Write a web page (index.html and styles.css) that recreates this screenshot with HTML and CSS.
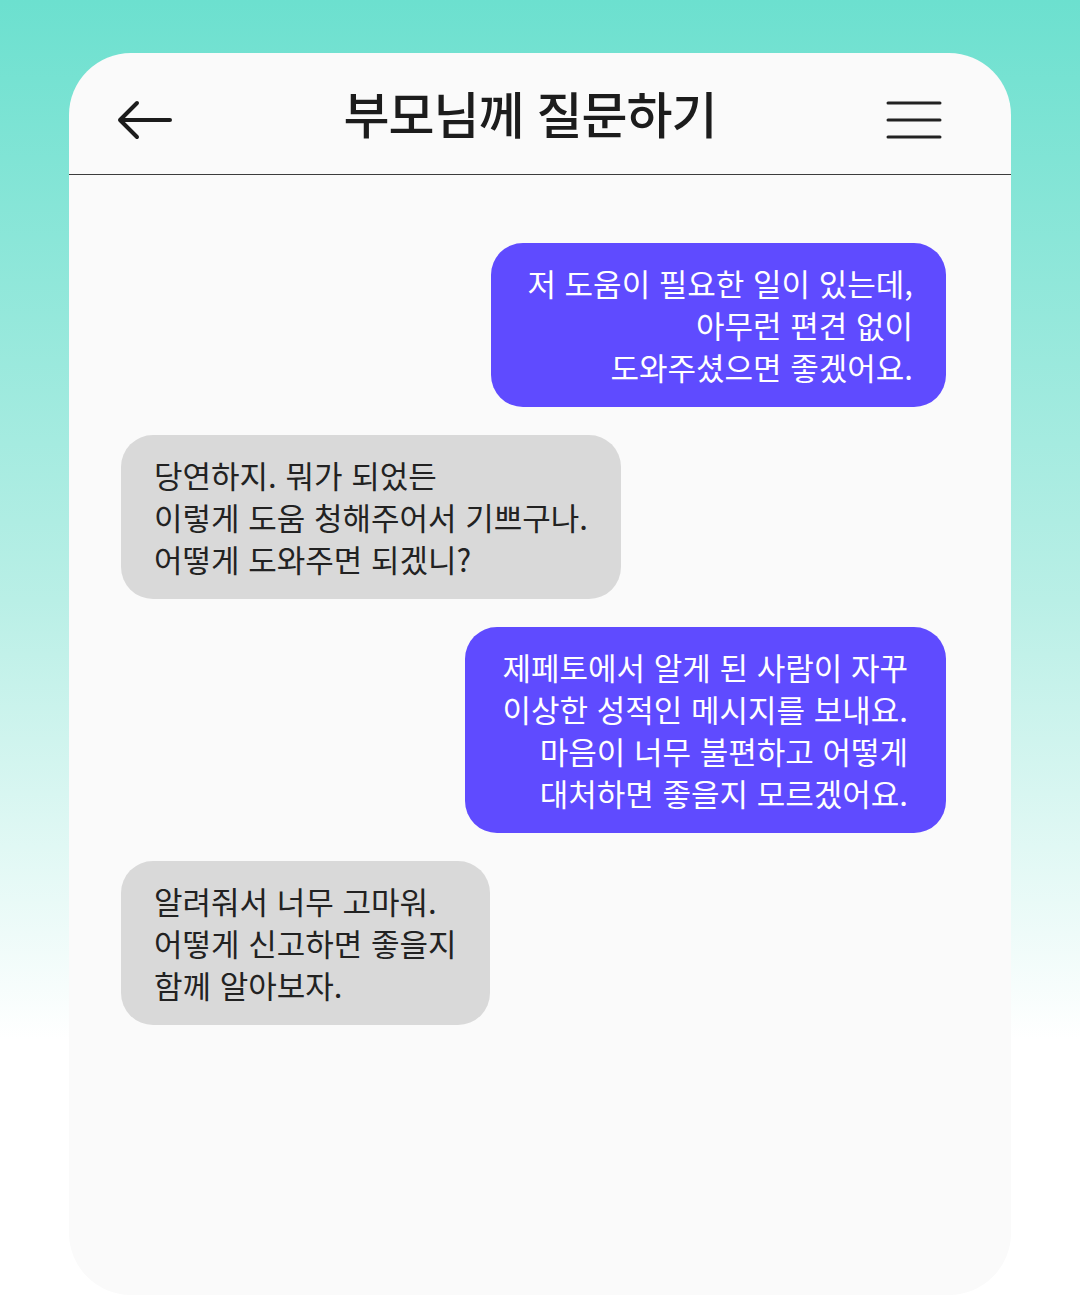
FILE: index.html
```html
<!DOCTYPE html>
<html lang="ko">
<head>
<meta charset="utf-8">
<title>부모님께 질문하기</title>
<link rel="stylesheet" href="styles.css">
</head>
<body>
<div class="page">
  <div class="card">
    <header class="header">
      <svg class="icon back" width="58" height="40" viewBox="0 0 58 40">
        <path d="M21 3 L4 20 L21 37 M4 20 H54" fill="none" stroke="#1c1c1c" stroke-width="4" stroke-linecap="round" stroke-linejoin="round"/>
      </svg>
      <h1 class="title">부모님께 질문하기</h1>
      <svg class="icon menu" width="56" height="40" viewBox="0 0 56 40">
        <path d="M2 3 H54 M2 20 H54 M2 37 H54" fill="none" stroke="#222" stroke-width="3" stroke-linecap="round"/>
      </svg>
    </header>
    <main class="chat">
      <div class="bubble me">저 도움이 필요한 일이 있는데,<br>아무런 편견 없이<br>도와주셨으면 좋겠어요.</div>
      <div class="bubble them">당연하지. 뭐가 되었든<br>이렇게 도움 청해주어서 기쁘구나.<br>어떻게 도와주면 되겠니?</div>
      <div class="bubble me wide">제페토에서 알게 된 사람이 자꾸<br>이상한 성적인 메시지를 보내요.<br>마음이 너무 불편하고 어떻게<br>대처하면 좋을지 모르겠어요.</div>
      <div class="bubble them">알려줘서 너무 고마워.<br>어떻게 신고하면 좋을지<br>함께 알아보자.</div>
    </main>
  </div>
</div>
</body>
</html>
```

FILE: styles.css
```css
* { box-sizing: border-box; }
html, body { margin: 0; padding: 0; }
body {
  width: 1080px;
  height: 1296px;
  overflow: hidden;
  font-family: "Noto Sans CJK KR", "Noto Sans", sans-serif;
  background: linear-gradient(180deg, #6ce0cf 0px, #b9efe6 600px, #ffffff 1040px, #ffffff 1296px);
}
.page {
  padding: 53px 69px 0 69px;
  height: 1296px;
}
.card {
  width: 942px;
  height: 1242px;
  background: #fafafa;
  border-radius: 62px;
  overflow: hidden;
  display: flex;
  flex-direction: column;
}
.header {
  height: 122px;
  border-bottom: 1px solid #3c3c3c;
  display: flex;
  align-items: center;
  justify-content: space-between;
  padding: 0 69px 0 47px;
}
.icon { display: block; }
.back { margin-top: 12px; }
.menu { margin-top: 12px; }
.title {
  margin: 0;
  font-size: 50px;
  line-height: 60px;
  font-weight: 500;
  color: #1c1c1c;
  letter-spacing: -1px;
  margin-top: -4px;
}
.chat {
  display: flex;
  flex-direction: column;
  gap: 28px;
  padding: 68px 65px 0 52px;
}
.bubble {
  font-size: 31px;
  line-height: 42px;
  letter-spacing: 0;
  padding: 19px 33px 19px 33px;
  border-radius: 32px;
  max-width: 100%;
}
.me {
  align-self: flex-end;
  background: #5f4bff;
  color: #ffffff;
  text-align: right;
  padding-left: 36px;
}
.me.wide {
  padding: 19px 38px 19px 38px;
}
.them {
  align-self: flex-start;
  background: #d9d9d9;
  color: #222222;
  text-align: left;
}
```
